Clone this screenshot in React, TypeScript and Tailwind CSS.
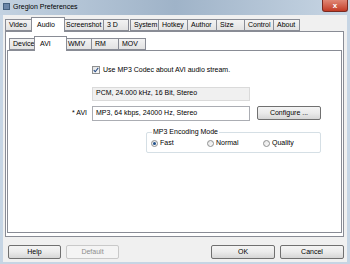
import type { ReactNode } from 'react'

const font = { fontFamily: '"Liberation Sans", Arial, sans-serif' }

function Tab({ label, w, active = false }: { label: string; w: number; active?: boolean }) {
  return (
    <div
      className={`flex items-center justify-start pl-[3px] border border-[#898c95] text-[7px] text-black ${
        active
          ? 'h-[15px] bg-white border-b-0 relative z-10 -mb-px -mx-[2px] pl-[5px]'
          : 'h-[12px] bg-gradient-to-b from-[#f3f3f3] to-[#e2e2e2] -ml-px first:ml-0'
      }`}
      style={{ width: active ? w + 4 : w }}
    >
      {label}
    </div>
  )
}

function Button({ children, w, disabled = false }: { children: ReactNode; w: number; disabled?: boolean }) {
  return (
    <div
      className={`h-[14px] flex items-center justify-center rounded-[2px] border text-[7px] ${
        disabled
          ? 'border-[#c9c9c9] bg-[#f4f4f4] text-[#8d8d8d]'
          : 'border-[#707070] bg-gradient-to-b from-[#f4f4f4] via-[#ebebeb] to-[#d6d6d6] text-black'
      }`}
      style={{ width: w }}
    >
      {children}
    </div>
  )
}

function Radio({ label, checked = false }: { label: string; checked?: boolean }) {
  return (
    <div className="flex items-center gap-[2px] text-[7px]">
      <div className="w-[7px] h-[7px] rounded-full border border-[#8e8f8f] bg-gradient-to-br from-[#e6e6e6] to-[#fafafa] flex items-center justify-center">
        {checked && <div className="w-[3px] h-[3px] rounded-full bg-[#1e4f8a]" />}
      </div>
      <span>{label}</span>
    </div>
  )
}

export default function App() {
  return (
    <div className="w-[350px] h-[264px] bg-[#c6d5e4] flex flex-col overflow-hidden" style={font}>
      {/* title bar */}
      <div className="h-[15px] flex items-start relative bg-gradient-to-r from-[#c3d2e1] via-[#9fb3c8] to-[#c8d6e4]">
        <div className="mt-[3px] ml-[3px] w-[7px] h-[7px] bg-[#6b86a8] border border-[#44607f]" />
        <span className="ml-[3px] mt-[2px] text-[7px] text-black">Gregion Preferences</span>
        <div className="absolute right-[2px] top-0 w-[26px] h-[12px] rounded-b-[3px] bg-gradient-to-b from-[#e08775] to-[#c23a24] border border-[#7a2a20] border-t-0 flex items-center justify-center text-white text-[8px] font-bold leading-none">
          x
        </div>
      </div>

      {/* client area */}
      <div className="flex-1 mx-[3px] mb-[2px] bg-[#f0f0f0] flex flex-col px-[2px] pt-[2px]">
        <div className="flex items-end h-[14px]">
          <Tab label="Video" w={28} />
          <Tab label="Audio" w={30} active />
          <Tab label="Screenshot" w={42} />
          <Tab label="3 D" w={26} />
          <div className="w-[2px]" />
          <Tab label="System" w={29} />
          <Tab label="Hotkey" w={30} />
          <Tab label="Author" w={30} />
          <Tab label="Size" w={29} />
          <Tab label="Control" w={30} />
          <Tab label="About" w={27} />
        </div>

        <div className="w-[339px] h-[206px] border border-[#898c95] bg-white px-[1px] pt-[4px] flex flex-col">
          <div className="flex items-end h-[14px] ml-[2px]">
            <Tab label="Device" w={27} />
            <Tab label="AVI" w={29} active />
            <Tab label="WMV" w={28} />
            <Tab label="RM" w={28} />
            <Tab label="MOV" w={28} />
          </div>
          <div className="h-[183px] border border-[#898c95] bg-white flex flex-col pt-[14px] text-[7px] text-black">
            <div className="flex items-center ml-[84px] gap-[3px]">
              <div className="w-[8px] h-[8px] border border-[#8e8f8f] bg-gradient-to-br from-[#e3e3e3] to-[#fbfbfb] flex items-center justify-center">
                <svg viewBox="0 0 8 8" className="w-[6px] h-[6px]">
                  <path d="M1 4.2 L3 6.3 L7 1.2" fill="none" stroke="#264c86" strokeWidth={1.4} />
                </svg>
              </div>
              <span>Use MP3 Codec about AVI audio stream.</span>
            </div>

            <div className="ml-[84px] mt-[11px] w-[158px] h-[14px] border border-[#dadada] bg-[#f0f0f0] flex items-center pl-[3px]">
              PCM, 24.000 kHz, 16 Bit, Stereo
            </div>

            <div className="flex items-center mt-[5px]">
              <div className="w-[80px] text-right pr-[1px]">* AVI</div>
              <div className="ml-[4px] w-[158px] h-[15px] border border-[#abadb3] bg-white flex items-center pl-[3px]">
                MP3, 64 kbps, 24000 Hz, Stereo
              </div>
              <div className="ml-[7px]">
                <Button w={64}>Configure ...</Button>
              </div>
            </div>

            <div className="ml-[138px] mt-[11px] w-[175px] h-[21px] relative border border-[#d5dfe5] rounded-[2px]">
              <span className="absolute -top-[5px] left-[5px] bg-white px-[1px] leading-[8px]">MP3 Encoding Mode</span>
              <div className="flex items-center h-full pt-[3px] pl-[4px]">
                <div className="w-[56px]"><Radio label="Fast" checked /></div>
                <div className="w-[56px]"><Radio label="Normal" /></div>
                <Radio label="Quality" />
              </div>
            </div>
          </div>
        </div>

        <div className="flex items-center mt-[8px] pl-[3px] pr-[1px]">
          <Button w={53}>Help</Button>
          <div className="ml-[5px]"><Button w={53} disabled>Default</Button></div>
          <div className="flex-1" />
          <Button w={64}>OK</Button>
          <div className="ml-[5px]"><Button w={64}>Cancel</Button></div>
        </div>
      </div>
    </div>
  )
}
